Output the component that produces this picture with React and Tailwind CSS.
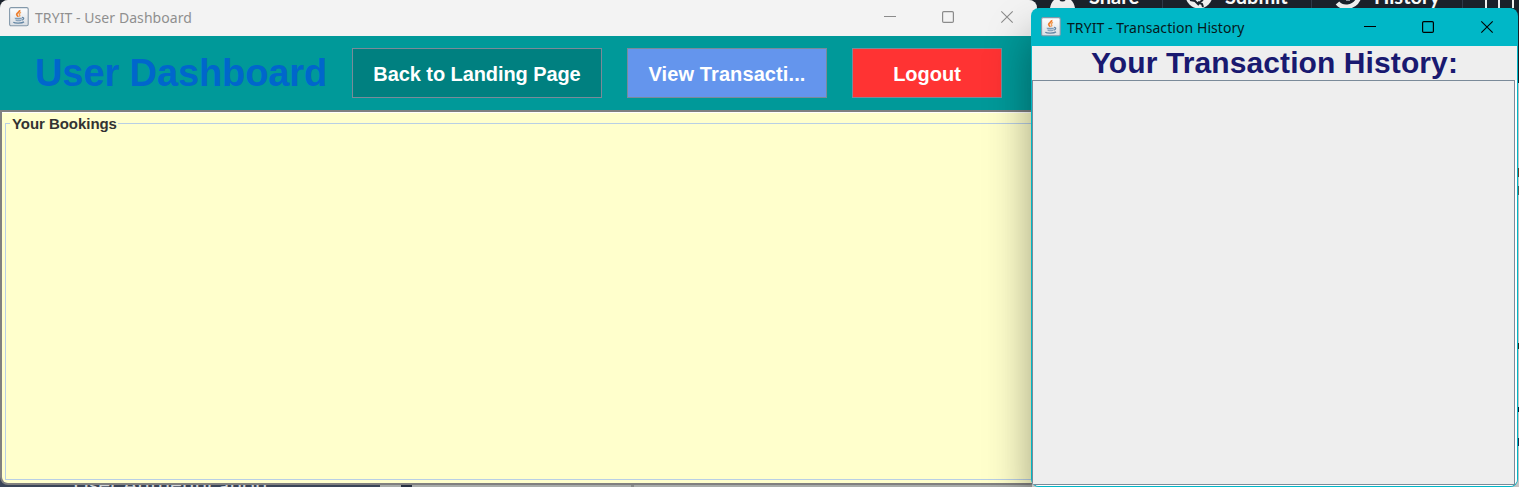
import React from 'react';

function JavaIcon() {
  return (
    <svg width="20" height="20" viewBox="0 0 20 20" className="block shrink-0">
      <defs>
        <linearGradient id="tile" x1="0" y1="0" x2="0" y2="1">
          <stop offset="0" stopColor="#ffffff" />
          <stop offset="1" stopColor="#d8dde2" />
        </linearGradient>
      </defs>
      <rect x="0.6" y="0.6" width="18.6" height="18.2" rx="1.5" fill="url(#tile)" stroke="#8499aa" strokeWidth="1.1" />
      <path d="M10.600 3c.9 2-3 2.700-2.900 4.500.1 1 1.200 1.400 1.400 2.400" fill="none" stroke="#ee7f30" strokeWidth="1.800" />
      <path d="M12 5.300c-1.700.8-2.200 1.500-1.400 2.500.5.700.2 1.300-.3 1.800" fill="none" stroke="#f0a05a" strokeWidth="1.400" />
      <path d="M5.500 10.700h7.500l-.8 3c-1.500.7-4 .7-5.500 0z" fill="#7f9db8" />
      <path d="M6 12.300c1.500.6 5 .6 6.600 0" fill="none" stroke="#dfe7ee" strokeWidth="0.700" />
      <path d="M13 10.600c2.400-.6 2.100 2.100-.3 2.500M4.300 15.200c1.800 1.300 8.500 1.200 10.700-.3" fill="none" stroke="#6487a5" strokeWidth="1.300" />
    </svg>
  );
}

function Controls({ className }) {
  return (
    <svg width="132" height="14" viewBox="0 0 132 14" fill="none" className={className}>
      <path d="M1 6.500h12" stroke="currentColor" />
      <rect x="59.600" y="1.600" width="10.800" height="10.800" rx="1.200" stroke="currentColor" strokeWidth="1.200" />
      <path d="M118.300 1.300l11.400 11.400M129.700 1.300l-11.400 11.400" stroke="currentColor" strokeWidth="1.100" />
    </svg>
  );
}

function HeaderButton({ className, children }) {
  return (
    <button className={`flex h-[50px] items-center justify-center border border-[#7a8a99] pt-[2px] text-[20px] font-bold whitespace-nowrap text-white ${className}`}>
      {children}
    </button>
  );
}

function Backdrop() {
  return (
    <div className="absolute inset-0 bg-[#eef0f0]">
      <div className="absolute top-0 left-0 h-6 w-4 bg-[#1b222c]" />
      <div className="absolute top-0 right-0 h-[83px] w-[500px] bg-[#1b222c]" />
      <div className="absolute top-0 left-[1050px] h-3 w-[469px] overflow-hidden font-['Lato','Open_Sans',sans-serif] text-[20px] leading-[20px] font-bold text-white">
        <svg width="469" height="12" viewBox="0 0 469 12" className="absolute inset-0">
          <path d="M0 8C1 2 4-1 8-2h9c4 1 7 4 8 10z" fill="#f4f4f4" />
          <circle cx="12.500" cy="-2" r="3.500" fill="#1b222c" />
          <circle cx="149" cy="-5" r="13.500" fill="#f4f4f4" />
          <path d="M140 0l5 1 4 4M148 2l4 2 1 3M153 0l-3 2" stroke="#1b222c" strokeWidth="2" fill="none" />
          <path d="M287.500 3c4 5 16 6 21-4" stroke="#f4f4f4" strokeWidth="4.500" fill="none" />
          <path d="M296 0h4" stroke="#8d9299" strokeWidth="2" />
          <path d="M112.500 0v8M261.500 0v8M412.500 0v8" stroke="#303c4c" />
          <path d="M436 0v8M449 0v8M463 0v8" stroke="#f4f4f4" strokeWidth="2" />
        </svg>
        <span className="absolute -top-[14px] left-[39px]">Share</span>
        <span className="absolute -top-[14px] left-[175px]">Submit</span>
        <span className="absolute -top-[14px] left-[324px]">History</span>
      </div>
      <div className="absolute bottom-0 left-0 h-3 w-[380px] bg-[#3a4558]" />
      <div className="absolute bottom-0 left-[380px] h-3 w-[652px] bg-[#a9adab]" />
      <div className="absolute bottom-0 left-[401px] h-3 w-[11px] bg-[#273142]" />
      <div className="absolute bottom-0 left-[631px] h-3 w-[3px] bg-[#888b8a]" />
      <div className="absolute bottom-0 left-[73px] h-[12px] w-[220px] overflow-hidden">
        <span className="absolute -top-[3px] left-0 font-['Lato','Open_Sans',sans-serif] text-[22px] leading-[24px] tracking-[0.1px] whitespace-nowrap text-[#d2d6d9]">User Authentication</span>
      </div>
      <div className="absolute top-[168px] right-0 h-[9px] w-[2px] bg-[#7a4b35]" />
      <div className="absolute top-[186px] right-0 h-[9px] w-[2px] bg-[#66706b]" />
      <div className="absolute top-[343px] right-0 h-[6px] w-[2px] bg-[#3a3325]" />
      <div className="absolute top-[407px] right-0 h-[5px] w-[2px] bg-[#101e3b]" />
      <div className="absolute top-[438px] right-0 h-[8px] w-[2px] bg-[#24355a]" />
    </div>
  );
}

function DashboardWindow() {
  return (
    <section className="absolute top-0 left-0 flex h-[485px] w-[1037px] flex-col overflow-hidden rounded-[8px] bg-[#808080]">
      <div className="flex h-9 shrink-0 items-start bg-[#f3f3f3] pl-[9px]">
        <div className="mt-[7px]"><JavaIcon /></div>
        <span className="mt-[8px] ml-[6px] font-['Noto_Sans','Open_Sans',sans-serif] text-[14px] leading-[20px] tracking-[0.07px] whitespace-nowrap text-[#8f8f8f]">TRYIT - User Dashboard</span>
        <Controls className="mt-[10px] mr-[22px] ml-auto text-[#8b8b8b]" />
      </div>
      <header className="flex h-[74px] shrink-0 items-center bg-[#009999] pl-[35px]">
        <h1 className="w-[317px] text-[38px] leading-[44px] font-bold tracking-[-0.1px] whitespace-nowrap text-[#0066cc]">User Dashboard</h1>
        <div className="flex gap-[25px]">
          <HeaderButton className="w-[250px] bg-[#008080] tracking-[-0.08px]">Back to Landing Page</HeaderButton>
          <HeaderButton className="w-[200px] bg-[#6495ed] tracking-[0.1px]">View Transacti...</HeaderButton>
          <HeaderButton className="w-[150px] bg-[#ff3333]">Logout</HeaderButton>
        </div>
      </header>
      <main className="mt-[2px] mb-[2px] ml-[2px] flex min-h-0 flex-1 flex-col rounded-bl-[6px] border-t border-white bg-[#ffffcc] pt-[2px] pb-[3px] pl-[3px]">
        <fieldset className="min-h-0 flex-1 border border-r-0 border-[#b8cfe5] pl-[4px]">
          <legend className="pr-px pl-[2px] text-[15px] leading-[17px] font-bold tracking-[-0.05px] text-[#333333]">Your Bookings</legend>
        </fieldset>
      </main>
    </section>
  );
}

function HistoryWindow() {
  return (
    <section className="absolute top-2 left-[1031px] flex h-[479px] w-[487px] flex-col overflow-hidden rounded-[8px] bg-[#00b7c7] pr-px pb-px pl-px shadow-[0_28px_45px_rgba(0,0,0,0.38)]">
      <div className="flex h-[38px] shrink-0 items-start pl-[9px]">
        <div className="mt-[9px]"><JavaIcon /></div>
        <span className="mt-[10px] ml-[6px] font-['Noto_Sans','Open_Sans',sans-serif] text-[14px] leading-[20px] tracking-[0.07px] whitespace-nowrap text-[#06191b]">TRYIT - Transaction History</span>
        <Controls className="mt-[12px] mr-[22px] ml-auto text-black" />
      </div>
      <div className="flex min-h-0 flex-1 flex-col rounded-b-[7px] bg-[#eeeeee]">
        <h2 className="flex h-[34px] shrink-0 items-center justify-center text-[30px] leading-[34px] font-bold tracking-[0.1px] whitespace-nowrap text-[#191970]">Your Transaction History:</h2>
        <div className="min-h-0 flex-1 rounded-b-[7px] bg-white pr-[2px] pb-px">
          <div className="h-full border border-[#7a8a99] bg-[#eeeeee]" />
        </div>
      </div>
    </section>
  );
}

export default function App() {
  return (
    <div className="relative h-[487px] w-[1519px] overflow-hidden font-['Liberation_Sans',Arial,sans-serif]">
      <Backdrop />
      <DashboardWindow />
      <HistoryWindow />
    </div>
  );
}
